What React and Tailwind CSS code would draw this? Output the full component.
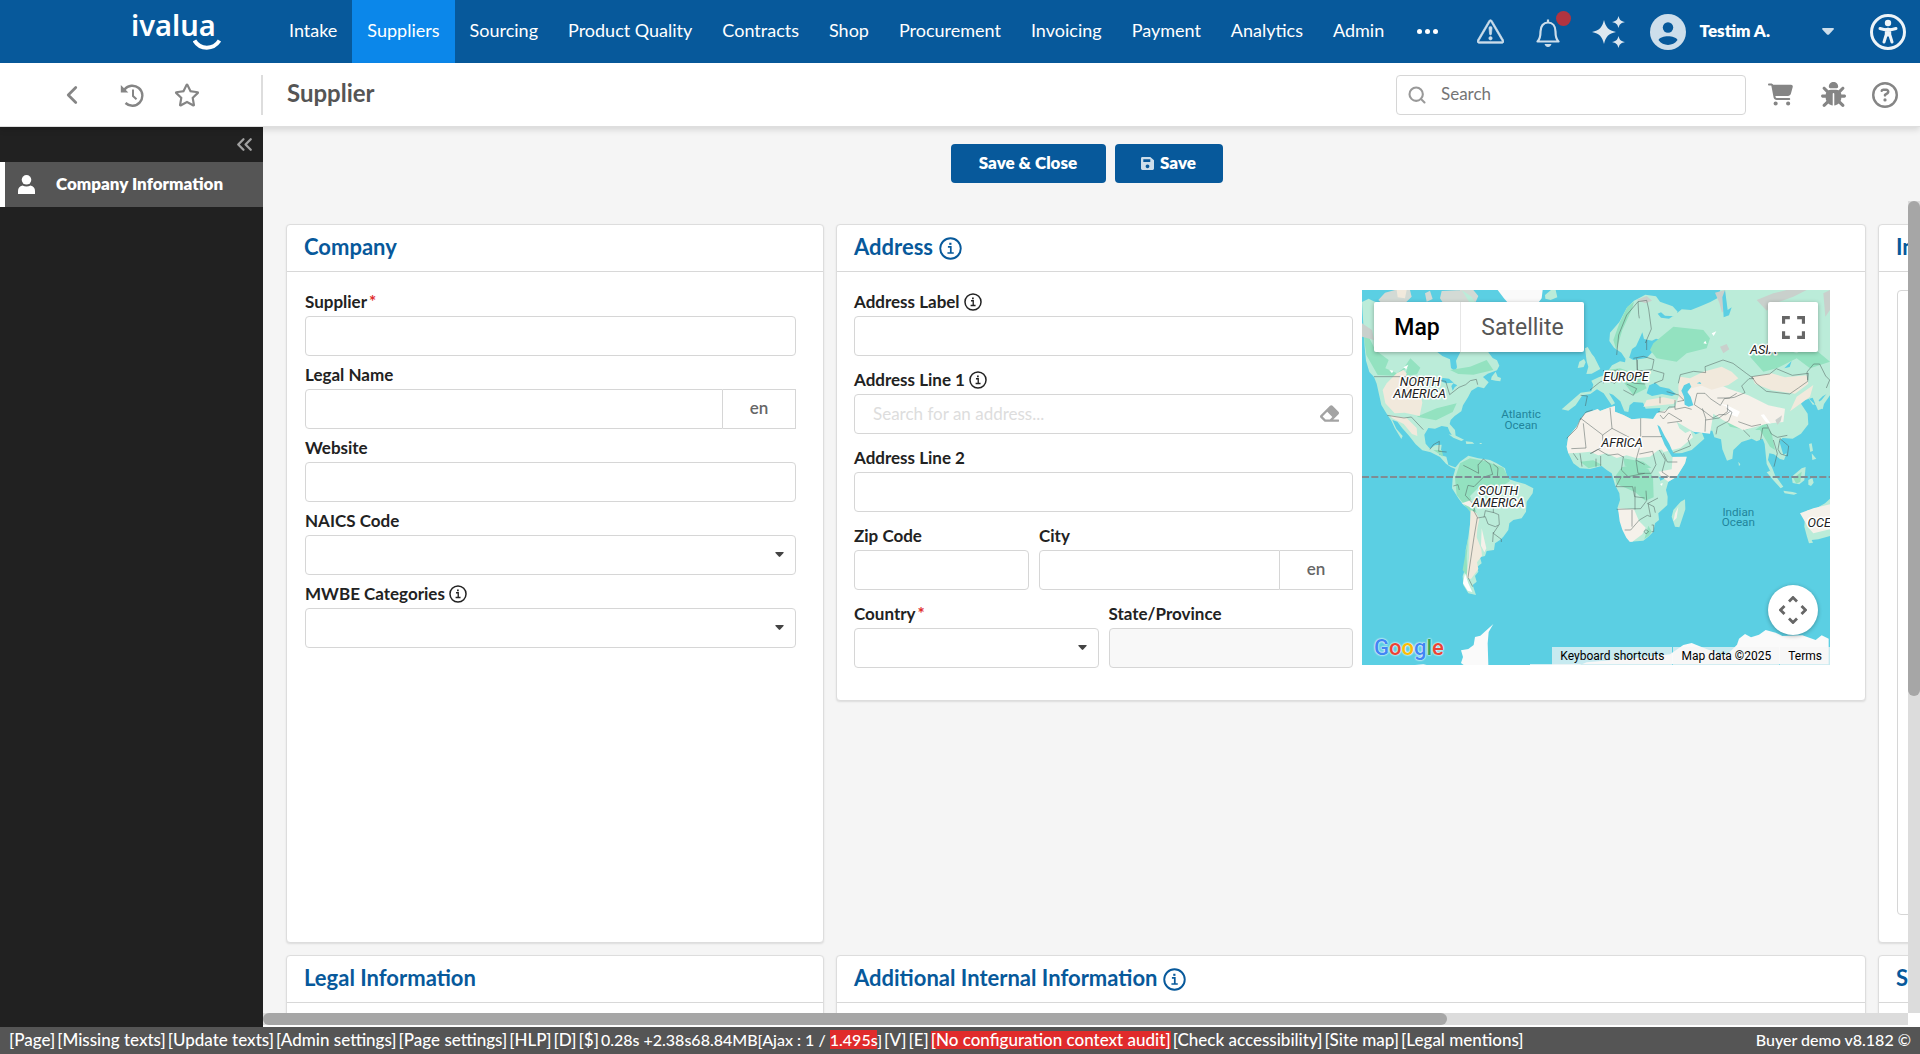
import React from "react";
import { FaEraser, FaRegStar } from "react-icons/fa";
import { FaCartShopping, FaBug, FaRegCircleQuestion } from "react-icons/fa6";
import { FiSearch } from "react-icons/fi";
import { BsExclamationTriangle } from "react-icons/bs";
import { ChevronLeft, ChevronsLeft } from "lucide-react";

const NAV = ["Intake", "Suppliers", "Sourcing", "Product Quality", "Contracts", "Shop", "Procurement", "Invoicing", "Payment", "Analytics", "Admin"];

function InfoIcon({ className }) {
  return (
    <svg viewBox="0 0 24 24" className={className} fill="none" stroke="currentColor" aria-hidden="true">
      <circle cx="12" cy="12" r="10.7" strokeWidth="2" />
      <path d="M9.3 10.3h3v6.2M8.8 16.7h6.6" strokeWidth="1.8" />
      <path d="M10.7 6h2.3v2.2h-2.3z" fill="currentColor" stroke="none" />
    </svg>
  );
}

function Caret({ className }) {
  return (
    <svg viewBox="0 0 12 7" className={className} fill="currentColor" aria-hidden="true">
      <path d="M1 0h10q1.5.2.6 1.4L7 6.4q-1 .9-2 0L.4 1.4Q-.4.2 1 0z" />
    </svg>
  );
}

function Logo() {
  return (
    <a href="#home" aria-label="ivalua" className="relative ml-[131px] block w-[90px] font-['Noto_Sans'] text-[29px] leading-[46px] font-semibold text-white">
      ivalua
      <svg viewBox="0 0 28 11" className="absolute right-0 -bottom-0.5 h-[11px] w-7" fill="none" stroke="#fff" strokeWidth="4">
        <path d="M1.5 1.5C7 11 20.500 11 26.500 1.500" />
      </svg>
    </a>
  );
}

function BellIcon() {
  return (
    <span className="relative block h-7 w-6">
      <svg viewBox="0 0 24 28" className="h-7 w-6" fill="none" stroke="#cddeeb" strokeWidth="2.200">
        <path d="M12 .5v3M1.500 22.500c2.600-2.400 3-4.500 3-10C4.500 7 7.500 3.500 12 3.500s7.500 3.500 7.500 9c0 5.500.4 7.600 3 10z" strokeLinejoin="round" />
        <path d="M8.500 25h7q-1 3-3.500 3t-3.500-3z" fill="#cddeeb" stroke="none" />
      </svg>
      <span className="absolute -top-2 left-5 h-[15px] w-[15px] rounded-full bg-[#b23440]" />
    </span>
  );
}

function Sparkles() {
  return (
    <svg viewBox="0 0 34 32" className="h-8 w-[34px]" fill="#dce7f0">
      <path d="M12 4c1.800 7.500 4.500 10.200 12 12-7.500 1.800-10.200 4.500-12 12-1.800-7.500-4.500-10.200-12-12 7.500-1.800 10.200-4.500 12-12z" />
      <path d="M26.500 0c1 4 2.500 5.200 6.500 6-4 1-5.500 2-6.500 6-1-4-2.500-5-6.500-6 4-.8 5.500-2 6.500-6zM26.500 20c1 4 2.500 5.200 6.500 6-4 1-5.500 2-6.500 6-1-4-2.500-5-6.500-6 4-.8 5.500-2 6.500-6z" />
    </svg>
  );
}

function TopBar() {
  return (
    <header className="flex h-[63px] shrink-0 items-center bg-[#07599b] text-white">
      <div className="w-[274px] shrink-0 pb-[13px]"><Logo /></div>
      <nav className="flex h-full text-[18px] whitespace-nowrap">
        {NAV.map((n) => (
          <a key={n} href={"#" + n} className={n === "Suppliers" ? "flex items-center bg-[#0b87ea] px-[15px] pb-[2px]" : "flex items-center px-[15px] pb-[2px]"}>{n}</a>
        ))}
        <button aria-label="More" className="ml-4 flex items-center gap-[3px] px-[2px]">
          <span className="h-[5px] w-[5px] rounded-full bg-white" />
          <span className="h-[5px] w-[5px] rounded-full bg-white" />
          <span className="h-[5px] w-[5px] rounded-full bg-white" />
        </button>
      </nav>
      <div className="ml-auto flex items-center pr-3.5">
        <button aria-label="Alerts" className="text-[#cddeeb]"><BsExclamationTriangle size={27} strokeWidth={0.4} /></button>
        <button aria-label="Notifications" className="ml-8 pt-[2px]"><BellIcon /></button>
        <button aria-label="Assistant" className="ml-8"><Sparkles /></button>
        <button className="ml-6 flex items-center">
          <svg viewBox="0 0 36 36" className="h-9 w-9">
            <circle cx="18" cy="18" r="18" fill="#cddeeb" />
            <circle cx="18" cy="13.500" r="5.200" fill="#07599b" />
            <path d="M8.500 26c2.500-5 16.500-5 19 0-4.500 6.500-14.500 6.500-19 0z" fill="#07599b" />
          </svg>
          <span className="pb-[2px] pl-3.5 text-[17px] font-extrabold">Testim A.</span>
          <Caret className="ml-[52px] h-[7px] w-3 text-[#cddeeb]" />
        </button>
        <button aria-label="Accessibility" className="ml-9">
          <svg viewBox="0 0 36 36" className="h-9 w-9" fill="none" stroke="#eef4f8">
            <circle cx="18" cy="18" r="16.500" strokeWidth="3" />
            <circle cx="18" cy="9" r="3.200" fill="#eef4f8" stroke="none" />
            <path d="M10 14.500c5 1.600 11 1.600 16 0M18 15v6M14 28l2.300-7.500v-5h3.400v5L22 28" strokeWidth="3" strokeLinecap="round" strokeLinejoin="round" />
          </svg>
        </button>
      </div>
    </header>
  );
}

function SubBar() {
  return (
    <div className="relative z-10 flex h-16 shrink-0 items-center border-b border-[#dedede] bg-white text-[#858585] shadow-[0_3px_6px_rgba(0,0,0,0.12)]">
      <div className="flex h-10 w-[263px] shrink-0 items-center border-r-2 border-[#ddd] pl-[57px]">
        <button aria-label="Back"><ChevronLeft size={30} strokeWidth={2.200} /></button>
        <button aria-label="History" className="ml-[33px]">
          <svg viewBox="0 0 24 24" className="h-6 w-6" fill="none" stroke="currentColor" strokeWidth="2.400">
            <path d="M4.500 6.500A10 10 0 1 1 5.500 20" />
            <path d="M13 6.500V13l3.500 3.200" strokeWidth="2" />
            <path d="M.8 2v7.500h7.500z" fill="currentColor" stroke="none" />
          </svg>
        </button>
        <button aria-label="Favorite" className="ml-[30px]"><FaRegStar size={26} /></button>
      </div>
      <h1 className="ml-6 pb-1 text-[24px] leading-8 font-bold text-[#555]">Supplier</h1>
      <div className="ml-auto flex items-center pr-[22px]">
        <label className="flex h-10 w-[350px] items-center rounded-[4px] border border-[#d6d6d6] px-[10px]">
          <FiSearch size={20} strokeWidth={2.500} className="text-[#999]" />
          <input aria-label="Search" placeholder="Search" className="ml-3.5 min-w-0 flex-1 pb-[2px] text-[17px] outline-none placeholder:text-[#757575]" />
        </label>
        <button aria-label="Cart" className="ml-[22px]"><FaCartShopping size={25} /></button>
        <button aria-label="Report a bug" className="ml-7"><FaBug size={25} /></button>
        <button aria-label="Help" className="ml-[26px]"><FaRegCircleQuestion size={26} /></button>
      </div>
    </div>
  );
}

function Sidebar() {
  return (
    <aside className="flex w-[263px] shrink-0 flex-col bg-[#212121]">
      <button aria-label="Collapse menu" className="flex h-[35px] items-center justify-end pr-[6px] text-[#a0a0a0]">
        <ChevronsLeft size={25} strokeWidth={2.200} />
      </button>
      <a href="#company" className="flex h-[45px] items-center border-l-[5px] border-white bg-[#555] pl-[13px] text-[17px] font-extrabold text-white">
        <svg viewBox="0 0 17 19" className="h-[19px] w-[17px]" fill="#fff">
          <ellipse cx="8.500" cy="4.800" rx="4.800" ry="4.800" />
          <path d="M0 19v-3q0-4.500 4.500-5.500 4 1.800 8 0 4.500 1 4.500 5.500v3z" />
        </svg>
        <span className="ml-[21px] pb-[2px]">Company Information</span>
      </a>
    </aside>
  );
}

function Card({ title, info, className = "", children }) {
  return (
    <section className={"rounded-[4px] border border-[#ddd] bg-white shadow-[0_1px_2px_rgba(0,0,0,0.1)] " + className}>
      <h2 className="flex h-[47px] items-center gap-[6px] border-b border-[#d8d8d8] px-[17px] text-[22px] font-bold whitespace-nowrap text-[#07599b]">
        <span className="pb-1">{title}</span>
        {info && <InfoIcon className="h-[23px] w-[23px]" />}
      </h2>
      {children}
    </section>
  );
}

const BOX = "h-10 w-full rounded-[4px] border border-[#d6d6d6] bg-white px-[18px] text-[17px] outline-none placeholder:text-[#ddd] disabled:bg-[#f8f8f8]";

function Field({ id, label, required, info, kind = "text", placeholder, disabled, className = "" }) {
  return (
    <div className={className}>
      <div className="flex h-[26px] items-center gap-1 pb-[2px] text-[17px] font-bold text-[#222]">
        <label htmlFor={id} className="leading-6">
          {label}
          {required && <span className="pl-[2px] text-[#e02b2b]">*</span>}
        </label>
        {info && <InfoIcon className="h-[18px] w-[18px]" />}
      </div>
      {kind === "select" && (
        <div className="relative">
          <select id={id} className={BOX + " appearance-none"} defaultValue=""><option value=""></option></select>
          <Caret className="pointer-events-none absolute top-[17px] right-3 h-[5px] w-[9px] text-[#444]" />
        </div>
      )}
      {kind === "lang" && (
        <div className="flex h-10">
          <input id={id} className="min-w-0 flex-1 rounded-l-[4px] border border-[#d6d6d6] px-3 outline-none" />
          <button className="w-[73px] border border-l-0 border-[#d6d6d6] pb-[2px] text-[17px] font-semibold text-[#666]">en</button>
        </div>
      )}
      {kind === "text" && <input id={id} disabled={disabled} className={BOX} />}
      {kind === "search" && (
        <div className="relative">
          <input id={id} placeholder={placeholder} className={BOX + " pb-[2px]"} />
          <button aria-label="Clear address" className="absolute top-[10px] right-3.5 text-[#a3a3a3]"><FaEraser size={19} /></button>
        </div>
      )}
    </div>
  );
}

function MapLabel({ x, y, water, children }) {
  return water ? (
    <text x={x} y={y} textAnchor="middle" fontSize="35" fill="#22859b" fontFamily="Roboto">{children}</text>
  ) : (
    <text x={x} y={y} textAnchor="middle" fontSize="38" fontStyle="italic" fontFamily="Roboto" fill="#222" stroke="#fff" strokeWidth="9" strokeLinejoin="round" paintOrder="stroke">{children}</text>
  );
}

function WorldMap() {
  return (
    <svg viewBox="36 30 1404 1125" className="block h-[375px] w-[468px]" role="img" aria-label="World map">
      <path fill="#5bcfe3" d="M36 30h1404v1125H36z" />
      <g fill="#d3dad5">
        <path d="M85 60l20-22 30-8h45l5 20-20 20H95zM225 40l15-8 8 25-18 8zM270 55l5-22 60-3 20 20 20 8-10 20h-80zM330 30h40l15 18-8 18-25-12z" />
        <path fill="#f1e9dc" d="M140 30h30l-5 25-22-3z" />
        <path fill="#fafafa" d="M443 30h135l-3 25-45 60-30-10-25-35-12-14z" />
        <path fill="#bbecd9" d="M585 45l18-15h14l5 22-20 8-16-4zM335 30l30 20 12 18h-18z" />
      </g>
      <g fill="#bbecd9">
        <path d="M36 66l20-10 15 8 25 8 154 48 12 96 15 12 23 10 3 26 12 10 6-12-3-20 12-24 10-110 60 74 16 36 12 16 13 7 7 16-7 14-28 10-14 10 17 16-14 18-18-5-20 12-10 20-15 24-5 18-20 14-12 12-3 12 16 18 2 18-8 2-10-15-6-14-18-3-20 8-20-2-12 20 4 27 13 15 15-10 20-2-2 16-6 14 22 6 6 24 20 8 20-5 5 12-14 2-24-10-14-10-18-20-28-14-25-6-20-18-20-26-20-22-15-20-15-5 12 26 19 22-4 9-20-33-10-22-15-22-15-25-6-28-8-36-8-20-14-15-10-34-4-40z" />
        <path d="M425 290l12-15 6 15 10 4-2 10-14-2-14-3zM296 463l22 4 24 12-8 4-24-10zM347 484l20 2 6 5-24 1zM389 489h6v3h-6z" />
        <path d="M318 560l12-15 25-18 30 8 35 5 20 10 25 15 5 20-2 10 32 10 25 7 25 13-2 15-18 25-2 30-13 20-25 5-12 10-3 20-15 20-10 10-15 10-3 20-22 3-5 15-15 4 5 18-13 10 3 15-10 13 5 17-12 10 10 30-23-5-15-25-2-27 10-28-1-50 8-40 7-50v-30l-22-15-15-20-19-30 2-30z" />
        <path d="M692 338l32-4 6-20-6-12 22-10 20-8 20-28 24-12 15 3 3-18-7-18 12 2 5 20 12 7 40-6 15-16 3-18 16-4 12-15-18-5-12 6-24-5-5-20-9 20-10 22-12 8-8 25-12 4-12-18-22-15-14-20 2-25 28-32 22-42 22-22 34-18 32 5 12 16 38 14 15 16-8 14-30-2-12-10-10 4 10 12 24 3 18-12 20-16 28 2 30-12 28-12 22-12 10-30h340v305l-35 20-12 12 10 25-12 5-16-38-25 8-10 10 20 30 2 32-22 28-25 15-30-2-10 10 12 40 10-4-8 20-12-3-18-14-14-3-4 20 12 22 10 26-12-8-14-28-6-60-6-16-18 8-15-8-30 10-25 24-3 26-16 6-14-34-4-30-20-6-6-20h-30l-22 5-20-20-18-16-15-32-10-10 8 20 18 30 24 20 15 14 18-7 8 20-38 34-50 16-22-34-14-32-12-22-2-24 6-30-44 2-8-18-28-2-12 10-4 20-12-2-12-30-22-20-12-4 18 30-10 6-24-36-20-12-20 14-24 4-20 30-22 16-20-4z" />
        <path d="M743 387L750 393 780 382 795 378 795 395 820 405 845 418 880 415 920 418 925 435 935 460 950 495 965 515 968 530 1010 530 1005 550 980 590 955 605 948 630 953 650 952 675 925 700 927 720 915 730 910 755 895 770 880 782 840 785 835 770 820 740 815 720 802 685 810 660 808 640 795 615 785 580 770 570 755 558 720 567 690 565 670 550 655 520 650 500 655 470 680 440 690 420z" />
        <path d="M705 205l8-4 12 20 8 10 12 24 6 12-26 14-16 1 6-22-5-16zM688 245l14-8 5 10-6 14-18 3z" />
        <path d="M1005 658l-13 7-22 25-5 20 10 30 13 2 8-24 10-30zM1390 690l35-20 15-14v112l-35 10-20 2 4 8-12 2-6-20-8-30 2-32 8-18zM1260 572l20 20 20 28-8 5-22-24-20-24zM1300 632l28 4 14 4-10 4-28-4zM1325 590l30-25 12-4-4 40-15 12-20-4zM1375 600l12-6 4 14-8 10-8-4zM1377 492l8-2 4 22-8 4-2-12zM1385 520l14 16-12 4z" />
        <path d="M1375 355l14 20 25-14 20-25 6-30v40l-18 26-4 16-20-12zM1165 545l6 8-4 6z" />
      </g>
      <g fill="#93e2c0">
        <path d="M36 130l40 80 40 30-10 25 35 15 20-15 20-30 30 28-10 20-38 5 10-25-40 24-50-2-34-60zM300 270l60-10 50-20 20 30-60 14-45-2zM330 550l30-15 45 8 55 20 20 40-30 20-60-5-30 30 20 50-20-3-40-50-5-50zM355 770l-5 60 2 60-14-20zM910 190l60-50 90 10 20 25-10 30-60 15-30 25-60-10-20-25zM1200 230l60-40 80 30 40-25 60 50-60 20-40-30-60 30-40 10zM790 180l18-50 24-50 20-15-5 20-30 65-18 60z" />
        <path d="M795 590l20-28 40-10 40 15 14 25 2 60-25 10-30-25-30-14-26-10zM820 535l60 10 24 18-30 4-50-10zM690 545l40-4 26 14-40 10zM905 755l-8 12-14 10 12-40zM1215 450l30-20 20 30 10 50-15-10-30-50zM1120 410l30 20 60 10-20 10-50-10zM770 270l40-5 60 20 20 40-40 20-30-40-40-10zM1330 595l25-20-4 30-12 6zM200 410l60-25 60-15-12 26-50 25zM250 510l30 20-5-20z" />
      </g>
      <g fill="#f5f1ea">
        <path d="M743 387L750 393 780 382 795 378 795 395 820 405 845 418 880 415 920 418 925 435 935 460 945 490 938 508 925 510 900 530 860 535 830 526 800 534 770 520 745 526 720 515 690 518 655 520 650 500 655 470 680 440 690 420 705 400zM968 530L1010 530 1005 550 980 590 955 605 935 590 925 575 965 568z" />
        <path d="M920 400l55-20 15-40 10-5 25-20 50-10 30 6 30 15 60 20 60 30 50 10-5 40-50 5-70 20-60-30-30-20-10 60-50-6-50-30 8 20 18 14 15-7 8 20-38 32-50 12-14-20-30-60z" />
        <path fill="#f1e9dc" d="M985 320l5-30 30 5 40-20 55-15 30 15 20 20-30 20-50 14-30-12-40 10-8 40-20-12zM1205 290l60-10 40 12 65-6 5 25-40 30-70-10-50-20zM880 380l10-20 50-8 40 8-10 12zM1340 350l50-35-10 35-60 44z" />
        <path fill="#f1e9dc" d="M110 310l30-30 20-10 10 10-5 20 40 8 12 60-8 40-45-10-30 2-28-30-8-40zM120 406l50 8 30 30 2 24-16-6-25-30-35-18zM362 690l16 8 10 18-6 30-2 26 14 35 2 20-15 20 4 20-22 30-14-4 8-60 2-80z" />
        <path d="M804 685l48 3 15 35 20 20-10 20-30 22h-8l-10-12-12-24-8-25zM975 700l10-20-5 34-10 10zM1350 700l40-15 50-12v75l-50 12-14-16z" />
        <path d="M335 670l35 16-6-26zM395 745l14 60-6 12-10-20z" />
      </g>
      <g fill="#c9d0cc">
        <path d="M1095 38l30-8 5 50-14 18-8-30zM1220 60l50-20 40-10h60l-40 20-60 22-20 20zM1110 200l20-8 8 16-18 12zM1276 420l20-14-4 18-10 10zM860 60l30-12 16 14-20 8zM36 130l30 20 6 30-36-10zM1420 40l20-10v60l-14 20z" />
      </g>
      <g fill="#fff">
        <path d="M1100 370l30 5 40 20-8 16-26-10-8-22zM1232 405l10-2 20 28-14-4zM160 262l15-8-6 14zM118 270l12 2-4 8zM1060 190l6-8 4 10zM1085 160l14-6-8 14zM345 880l10 30 12 26-14-4-14-22zM930 612l8-3-2 9z" />
      </g>
      <g fill="#5bcfe3">
        <path d="M890 340l8-24 18-8 14 12 28 6 20 16-12 6-30-6-30 6zM1002 316l16-8 6 12-12 16 10 14 8 26-14 4-12-6-2-24-8-18zM1125 30l8 60 12-8-8 24-16 6-4-60zM1303 265l22-22-6 18zM927 592l12-4 4 8-12 6zM265 300l14-6 18 2 14 12-24 2zM304 318l6-8 12 6-8 6-6 10zM1040 310l10-4 4 6z" />
        <path d="M922 434l8 6 14 28 14 24 12 28 40 0 6 8-50 2-22-36-14-34z" />
      </g>
      <path fill="#fafafa" d="M430 1032l-14 24-3 34 2 65h-74l-8-6 6-18-6-20 22-4 16-12 4-24 16-4zM540 1155h150l20-8 180-16 70-8 40-28 25-6 50 20 26 6v14l30-5 30-30 6-18 18-14 18 10 24-8 20-14 30 8 20 10 60-2 40 14 18-14 21 10v77H540zM195 1155l25-2 10 2z" />
      <g fill="none" stroke="#4c5c59" strokeWidth="2" strokeOpacity=".75" strokeLinejoin="round">
        <path d="M72 290h120l95 14 12 40 28-22 20-8 14-12 18-4 4 16M112 406l50 8 22-3 36 38M240 508l10-14 18-10-2 30 24 2" />
        <path d="M340 556l20 10 26 14-2-26M384 555l16-18 20 16 8 30-26 8M430 552l14 12-2 26M402 590l-30 30-18-4-8 30 22 24 6 22M310 618l14-4 4 16M370 690l12 22-10 60-18 120 14 28M382 714l24-4 8 22 22 8 12-6-2-30-14-6-26-6-4 20M430 698v-18l20-4M446 736l-16 24 24 18v8M428 786l2-30" />
        <path d="M690 420l18-24 20-6M650 475l30-30 12-30 66 50 28-20-6-62M700 430l8 74-44 2M758 465v36l-38 20M786 445l86 45v-75M876 470h60M872 490l-14 50 26 14M724 520l20-12 30 18 30-4 18 10M738 536v24M752 528v30M670 520l14 20M690 520l6 40M820 530l-6 40 20 20 50-10M858 540l6 40 40 0 14-26-10-40-40 8M940 520l12 26 30 0M928 510l18 30-10 36 24 16M814 590l-16 30 50 0 6 30 30 4M800 688l72-2 18-24-2-30M855 620v68M846 690v50M824 750h18l26-30 24-14 10 4-8-40 30-16M892 670l20 10 4 18M905 735h6v20h-6M882 754l6-5 8 6-8 7z" />
        <path d="M800 225l6-60 24-60 34-40 26-4 6 26 8 60-18 42M864 65l2 38 2 12M890 180v30M850 235l30-6 32 10-6 30-44 4-2-38M720 330l30-24 20-6 24 10 22-22M760 310l6-30 36-10 54 22M862 240v30l36 10M908 270l34 10-4 20-26 10M830 300l24 10 32 2M820 330l30 16 10-20-30-14M770 300l-10-30M692 346l20 2-6 30M930 370v-20M925 395l20 2 12-16 18 0M930 405l10 12 16-18 40 24-44 6M975 360v28l30-6 20 6M950 335l36 10 16 16-20 4" />
        <path d="M985 310l6-26 40-10 36 4-2-18 54-20 30 10 40 30 22 16-14 0-22 22 10 20-32 14-30 4-12 20-30-20-16-16-24 0-8 34 30 20 26 20 18-10 20 0 14-10M1102 354l36 0 22-14M1065 455l2-40-10-30M1067 420l40-6 26-20 0-20M1130 385l16 12-10 26-34 18-4 22M1165 425l40 14 28-6M1180 450l20 20M1205 290l54-8 20-16 48 20 48-6-2 24-28 20-26 18-70-8-30-24zM1373 300l-2-24 20-24 18 0 18 36 12 12-10 24M1250 432l14 30 18 10 30-6M1232 480l6-36 16 0M1270 480l12 40-10 40M1290 476l26 22-4 30-20-6-8-14zM1022 498l-8-20 8-16M970 518l50-20" />
      </g>
      <path d="M36 591h1404" stroke="#7f8c93" strokeWidth="6" strokeDasharray="21 7" />
      <MapLabel x={210} y={317}>NORTH</MapLabel>
      <MapLabel x={209} y={353}>AMERICA</MapLabel>
      <MapLabel x={445} y={645}>SOUTH</MapLabel>
      <MapLabel x={445} y={681}>AMERICA</MapLabel>
      <MapLabel x={828} y={304}>EUROPE</MapLabel>
      <MapLabel x={816} y={501}>AFRICA</MapLabel>
      <MapLabel x={1240} y={222}>ASIA</MapLabel>
      <MapLabel x={1450} y={741}>OCEANIA</MapLabel>
      <MapLabel water x={513} y={413}>Atlantic</MapLabel>
      <MapLabel water x={513} y={447}>Ocean</MapLabel>
      <MapLabel water x={1165} y={707}>Indian</MapLabel>
      <MapLabel water x={1165} y={739}>Ocean</MapLabel>
    </svg>
  );
}

function MapPanel() {
  return (
    <div className="relative w-[468px] shrink-0 self-start overflow-hidden font-[Roboto]">
      <WorldMap />
      <div className="absolute top-3 left-3 flex h-[50px] rounded-[2px] bg-white text-[23px] shadow-[0_1px_4px_rgba(0,0,0,0.3)]">
        <button className="w-[87px] border-r border-[#e6e6e6] pt-[2px] font-medium text-black">Map</button>
        <button className="w-[123px] pt-[2px] text-[#565656]">Satellite</button>
      </div>
      <button aria-label="Toggle fullscreen" className="absolute top-3 right-3 flex h-[50px] w-[50px] items-center justify-center rounded-[2px] bg-white shadow-[0_1px_4px_rgba(0,0,0,0.3)]">
        <svg viewBox="0 0 22 22" className="h-[23px] w-[23px]" fill="none" stroke="#666" strokeWidth="3">
          <path d="M1.500 7.500v-6h6M14.500 1.500h6v6M20.500 14.500v6h-6M7.500 20.500h-6v-6" />
        </svg>
      </button>
      <button aria-label="Map camera controls" className="absolute right-3 bottom-[30px] flex h-[50px] w-[50px] items-center justify-center rounded-full bg-white shadow-[0_1px_4px_rgba(0,0,0,0.3)]">
        <svg viewBox="0 0 28 28" className="h-7 w-7" fill="none" stroke="#666" strokeWidth="2.800">
          <path d="M10 5.500l4-4 4 4M10 22.500l4 4 4-4M5.500 10l-4 4 4 4M22.500 10l4 4-4 4" />
        </svg>
      </button>
      <a href="#google" aria-label="Google" className="absolute bottom-[3px] left-3 text-[22px] leading-7 font-medium [text-shadow:0_0_2px_white,0_0_2px_white]">
        <span className="text-[#4285f4]">G</span><span className="text-[#ea4335]">o</span><span className="text-[#fbbc05]">o</span><span className="text-[#4285f4]">g</span><span className="text-[#34a853]">l</span><span className="text-[#ea4335]">e</span>
      </a>
      <div className="absolute right-0 bottom-0 flex h-[18px] items-center gap-px text-[12px] text-black">
        <button className="h-full bg-[#f5f5f5]/70 px-2">Keyboard shortcuts</button>
        <span className="flex h-full items-center bg-[#f5f5f5]/70 px-2">Map data ©2025</span>
        <a href="#terms" className="flex h-full items-center bg-[#f5f5f5]/70 px-2">Terms</a>
      </div>
    </div>
  );
}

function Footer() {
  return (
    <footer className="flex h-[27px] shrink-0 items-center justify-between bg-[#555] px-[9px] pb-[2px] text-[17px] font-medium whitespace-nowrap text-white">
      <div className="flex items-center gap-[2px]">
        <a href="#page">[Page]</a><a href="#missing">[Missing texts]</a><a href="#update">[Update texts]</a><a href="#admin">[Admin settings]</a><a href="#settings">[Page settings]</a><a href="#hlp">[HLP]</a><a href="#d">[D]</a><a href="#cost">[$]</a>
        <span className="text-[16px]">0.28s +2.38s68.84MB[Ajax : 1 / <span className="bg-[#e02b2b]">1.495s</span>]</span>
        <a href="#v">[V]</a><a href="#e">[E]</a>
        <a href="#audit" className="bg-[#e02b2b] leading-[18px]">[No configuration context audit]</a>
        <a href="#check">[Check accessibility]</a><a href="#sitemap">[Site map]</a><a href="#legal">[Legal mentions]</a>
      </div>
      <span className="text-[16px]">Buyer demo v8.182 ©</span>
    </footer>
  );
}

export default function App() {
  return (
    <div className="flex h-screen flex-col overflow-hidden bg-white font-[Lato,sans-serif]">
      <TopBar />
      <SubBar />
      <div className="flex min-h-0 flex-1">
        <Sidebar />
        <main className="flex min-w-0 flex-1 flex-col">
          <div className="flex min-h-0 flex-1 bg-[#f5f5f5]">
            <div className="min-w-0 flex-1 overflow-hidden">
              <div className="flex h-[97px] justify-center gap-[9px] pt-[17px] pl-[2px] text-[17px] font-extrabold text-white">
                <button className="h-[39px] w-[155px] rounded-[4px] bg-[#07599b] pb-[2px]">Save &amp; Close</button>
                <button className="flex h-[39px] w-[108px] items-center justify-center gap-[6px] rounded-[4px] bg-[#07599b]">
                  <svg viewBox="0 0 14 14" className="h-[13px] w-[13px]" fill="#cddeeb" fillRule="evenodd">
                    <path d="M1.500 0H10l4 3.500V12.500q0 1.500-1.500 1.500h-11Q0 14 0 12.500v-11Q0 0 1.500 0zM2.500 2.500v3H10v-3zM7 8a2 2 0 1 0 .01 0z" />
                  </svg>
                  <span className="pb-[2px]">Save</span>
                </button>
              </div>
              <div className="ml-[23px] grid grid-cols-[538px_1030px_538px] items-start gap-3">
                <Card title="Company" className="self-stretch">
                  <div className="flex flex-col gap-[7px] pt-[18px] pr-[27px] pl-[18px]">
                    <Field id="supplier" label="Supplier" required />
                    <Field id="legal" label="Legal Name" kind="lang" />
                    <Field id="website" label="Website" />
                    <Field id="naics" label="NAICS Code" kind="select" />
                    <Field id="mwbe" label="MWBE Categories" info kind="select" />
                  </div>
                </Card>
                <Card title="Address" info>
                  <div className="flex gap-[9px] pt-[18px] pr-[35px] pb-[32px] pl-[17px]">
                    <div className="flex min-w-0 flex-1 flex-col gap-3">
                      <Field id="alabel" label="Address Label" info />
                      <Field id="line1" label="Address Line 1" info kind="search" placeholder="Search for an address..." />
                      <Field id="line2" label="Address Line 2" />
                      <div className="grid grid-cols-[175px_1fr] gap-[10px]">
                        <Field id="zip" label="Zip Code" />
                        <Field id="city" label="City" kind="lang" />
                      </div>
                      <div className="grid grid-cols-2 gap-[10px]">
                        <Field id="country" label="Country" required kind="select" />
                        <Field id="state" label="State/Province" disabled />
                      </div>
                    </div>
                    <MapPanel />
                  </div>
                </Card>
                <Card title="Internal Information">
                  <div className="m-[18px] mb-[27px] h-[625px] rounded-[4px] border border-[#d6d6d6]" />
                </Card>
                <Card title="Legal Information" className="h-40"></Card>
                <Card title="Additional Internal Information" info className="h-40"></Card>
                <Card title="Supplier Status" className="h-40"></Card>
              </div>
            </div>
            <div className="mt-[74px] w-3 shrink-0 bg-[#dcdcdc]"><div className="h-[61%] rounded-full bg-[#a6a6a6]" /></div>
          </div>
          <div className="mr-3 mb-[2px] h-3 shrink-0 bg-[#dcdcdc]"><div className="h-full w-[72%] rounded-full bg-[#a6a6a6]" /></div>
        </main>
      </div>
      <Footer />
    </div>
  );
}
